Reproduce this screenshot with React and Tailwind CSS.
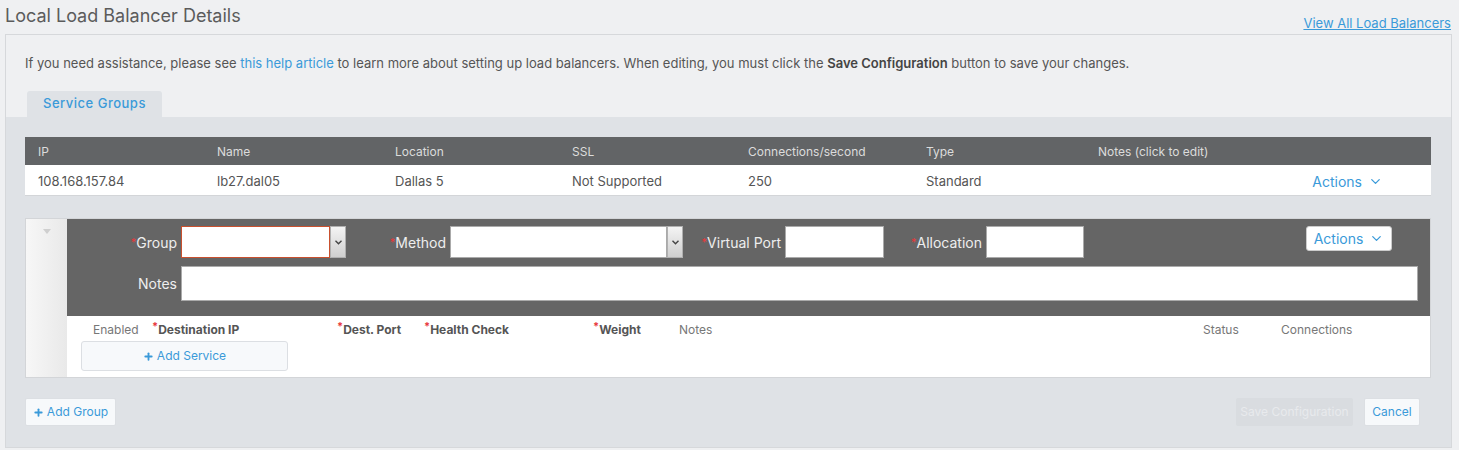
import React from 'react';
import { ChevronDown, Plus } from 'lucide-react';

const Req = () => <span className="text-[#e8393c] text-[11px] align-top leading-none">*</span>;

const columns = [
  { label: 'IP', value: '108.168.157.84', w: 'w-[179px]' },
  { label: 'Name', value: 'lb27.dal05', w: 'w-[178px]' },
  { label: 'Location', value: 'Dallas 5', w: 'w-[177px]' },
  { label: 'SSL', value: 'Not Supported', w: 'w-[176px]' },
  { label: 'Connections/second', value: '250', w: 'w-[178px]' },
  { label: 'Type', value: 'Standard', w: 'w-[172px]' },
];

const SelectArrow = () => (
  <div className="w-[16px] h-full flex items-center justify-center bg-gradient-to-b from-[#f4f4f4] to-[#cfcfcf] border border-[#b0b0b0]">
    <svg width="7" height="5" viewBox="0 0 7 5"><path d="M0.5 0.8 L3.5 3.8 L6.5 0.8" fill="none" stroke="#444" strokeWidth="1.4" /></svg>
  </div>
);

const ServiceHead = ({ children, req, bold, className = '' }) => (
  <div className={`text-[12px] ${bold ? 'font-bold text-[#555]' : 'text-[#777]'} ${className}`}>
    {req && <Req />}
    {children}
  </div>
);

const App = () => {
  return (
    <div className="min-h-[450px] bg-[#eff0f2] font-['Inter','Liberation_Sans',Arial,sans-serif] text-[#555]">
      <div className="h-[34px] flex justify-between pl-[5px] pr-[8px]">
        <h1 className="text-[18px] leading-[32px] text-[#5b5b5b]">Local Load Balancer Details</h1>
        <a href="#" className="self-end mb-[1px] text-[13px] text-[#3a9ad9] underline">View All Load Balancers</a>
      </div>

      <div className="ml-[5px] mr-[7px] border border-[#d6d8db]">
        <div className="pt-[19px] pl-[19px]">
          <p className="text-[13px] leading-[18px] text-[#555]">
            If you need assistance, please see <a href="#" className="text-[#3a9ad9]">this help article</a> to learn more about setting up load balancers. When editing, you must click the <b className="font-semibold text-[#444]">Save Configuration</b> button to save your changes.
          </p>
          <div className="mt-[19px] ml-[2px] w-[135px] h-[26px] bg-[#dfe2e6] rounded-t-[3px] flex items-center justify-center text-[13px] font-medium text-[#3a9ad9] tracking-[0.5px]">
            Service Groups
          </div>
        </div>

        <div className="bg-[#dfe2e6] pt-[20px] pl-[19px] pr-[20px] pb-[21px]">
          {/* load balancer table */}
          <div>
            <div className="h-[28px] pt-[1px] bg-[#626466] flex items-center text-[12px] text-[#dcdcdc]">
              {columns.map((c) => (
                <div key={c.label} className={`${c.w} pl-[13px]`}>{c.label}</div>
              ))}
              <div className="pl-[13px]">Notes (click to edit)</div>
            </div>
            <div className="h-[31px] pt-[3px] bg-white border-b border-[#d3d5d8] flex items-center text-[13px] text-[#555]">
              {columns.map((c) => (
                <div key={c.label} className={`${c.w} pl-[13px]`}>{c.value}</div>
              ))}
              <div className="flex-1" />
              <div className="mr-[48px] flex items-center gap-[6px] text-[14px] text-[#3a9ad9]">
                Actions <ChevronDown size={15} strokeWidth={2} />
              </div>
            </div>
          </div>

          {/* service group */}
          <div className="mt-[22px] flex border border-[#d3d5d8] bg-white">
            <div className="w-[41px] bg-gradient-to-r from-[#f7f7f7] to-[#e9e9e9] flex justify-center pt-[10px]">
              <svg width="8" height="6" viewBox="0 0 8 6"><path d="M0 0 L8 0 L4 5 Z" fill="#cfcfcf" /></svg>
            </div>
            <div className="flex-1">
              <div className="bg-[#656565] h-[97px] pt-[7px] pr-[12px]">
                <div className="flex items-start">
                  <label className="w-[114px] pr-[4px] h-[32px] flex items-center justify-end text-[14px] text-[#eee]"><Req />Group</label>
                  <div className="flex h-[32px]">
                    <div className="w-[149px] bg-white border border-[#c9502e]" />
                    <SelectArrow />
                  </div>
                  <label className="w-[104px] pr-[4px] h-[32px] flex items-center justify-end text-[14px] text-[#eee]"><Req />Method</label>
                  <div className="flex h-[32px]">
                    <div className="w-[217px] bg-white border border-[#aaa]" />
                    <SelectArrow />
                  </div>
                  <label className="w-[102px] pr-[4px] h-[32px] flex items-center justify-end text-[14px] text-[#eee]"><Req />Virtual Port</label>
                  <div className="h-[32px] w-[99px] bg-white border border-[#aaa]" />
                  <label className="w-[102px] pr-[4px] h-[32px] flex items-center justify-end text-[14px] text-[#eee]"><Req />Allocation</label>
                  <div className="h-[32px] w-[98px] bg-white border border-[#aaa]" />
                  <div className="flex-1" />
                  <button className="mr-[26px] h-[25px] w-[86px] bg-white rounded-[3px] border border-[#ccc] flex items-center justify-center gap-[6px] text-[14px] text-[#3a9ad9]">
                    Actions <ChevronDown size={15} strokeWidth={2} />
                  </button>
                </div>
                <div className="flex items-center mt-[8px]">
                  <label className="w-[114px] pr-[4px] text-right text-[14px] text-[#eee]">Notes</label>
                  <div className="flex-1 h-[35px] bg-white border border-[#aaa]" />
                </div>
              </div>
              <div className="h-[61px]">
                <div className="flex items-center h-[25px] pt-[2px]">
                  <ServiceHead className="ml-[26px] w-[59px]">Enabled</ServiceHead>
                  <ServiceHead req bold className="w-[185px]">Destination IP</ServiceHead>
                  <ServiceHead req bold className="w-[87px]">Dest. Port</ServiceHead>
                  <ServiceHead req bold className="w-[169px]">Health Check</ServiceHead>
                  <ServiceHead req bold className="w-[86px]">Weight</ServiceHead>
                  <ServiceHead className="w-[524px]">Notes</ServiceHead>
                  <ServiceHead className="w-[78px]">Status</ServiceHead>
                  <ServiceHead>Connections</ServiceHead>
                </div>
                <button className="ml-[14px] w-[207px] h-[30px] bg-[#f7f9fb] border border-[#dcdfe3] rounded-[3px] flex items-center justify-center gap-[3px] text-[12px] text-[#3a9ad9]">
                  <Plus size={11} strokeWidth={4} /> Add Service
                </button>
              </div>
            </div>
          </div>

          <div className="mt-[20px] flex items-center">
            <button className="w-[91px] h-[28px] bg-[#f7f9fb] border border-[#dcdfe3] rounded-[2px] flex items-center justify-center gap-[3px] text-[12px] text-[#3a9ad9]">
              <Plus size={11} strokeWidth={4} /> Add Group
            </button>
            <div className="flex-1" />
            <button className="w-[117px] h-[28px] bg-[#d9dce0] rounded-[2px] text-[12px] text-[#e8eaed]">Save Configuration</button>
            <button className="ml-[11px] mr-[11px] w-[56px] h-[28px] bg-[#f7f9fb] border border-[#dcdfe3] rounded-[2px] text-[12px] text-[#3a9ad9]">Cancel</button>
          </div>
        </div>
      </div>
    </div>
  );
};

export default App;
